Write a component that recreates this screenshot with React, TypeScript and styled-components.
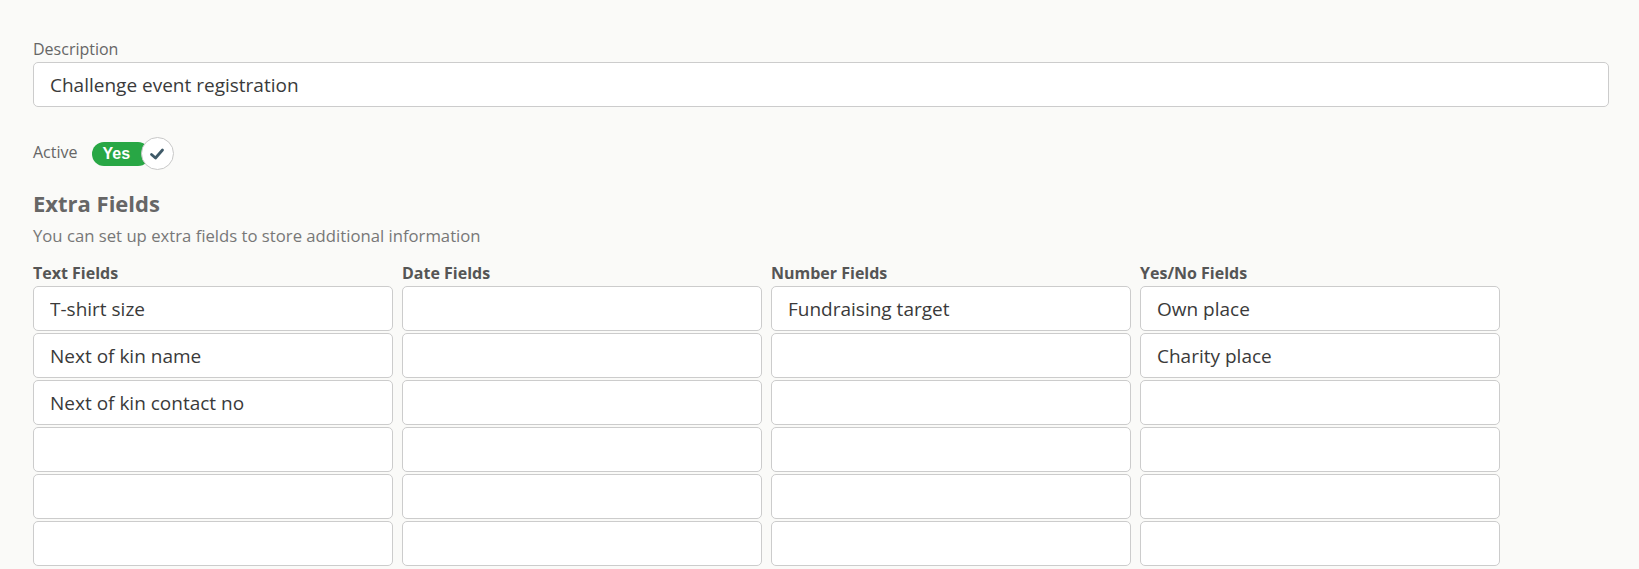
import React from "react";
import styled, { createGlobalStyle } from "styled-components";

const GlobalStyle = createGlobalStyle`
  html, body {
    margin: 0;
    padding: 0;
    background: #fafaf8;
    font-family: "Open Sans", "Liberation Sans", sans-serif;
    color: #333;
  }
  * {
    box-sizing: border-box;
  }
`;

const Page = styled.div`
  padding: 39px 30px 0 33px;
`;

const FieldLabel = styled.label`
  display: block;
  font-size: 16px;
  color: #666;
  line-height: 20px;
  margin-bottom: 3px;
`;

const TextBox = styled.input`
  display: block;
  width: 100%;
  height: 45px;
  padding: 0 16px;
  border: 1px solid #cccccc;
  border-radius: 5px;
  background: #fff;
  font-family: inherit;
  font-size: 19px;
  color: #3a3a3a;
  outline: none;
`;

const ActiveRow = styled.div`
  display: flex;
  align-items: center;
  gap: 14px;
  margin-top: 30px;
`;

const ActiveLabel = styled.span`
  font-size: 16px;
  color: #666;
  line-height: 20px;
  margin-top: -3px;
`;

const Toggle = styled.div`
  position: relative;
  display: flex;
  align-items: center;
  width: 82px;
  height: 33px;
`;

const Track = styled.div`
  display: flex;
  align-items: center;
  width: 58px;
  height: 24px;
  border-radius: 12px;
  background: #28a745;
  padding-left: 11px;
  color: #fff;
  font-family: "Liberation Sans", Arial, sans-serif;
  font-weight: bold;
  font-size: 16px;
`;

const Knob = styled.div`
  position: absolute;
  left: 49px;
  top: 0;
  width: 33px;
  height: 33px;
  border-radius: 50%;
  background: #fff;
  border: 1px solid #c8c8c8;
  display: flex;
  align-items: center;
  justify-content: center;
`;

const Heading = styled.h2`
  margin: 18px 0 0;
  font-size: 22px;
  font-weight: 700;
  color: #666;
  line-height: 30px;
`;

const Subtitle = styled.p`
  margin: 7px 0 0;
  font-size: 16.7px;
  color: #777;
  line-height: 22px;
`;

const Columns = styled.div`
  display: grid;
  grid-template-columns: repeat(4, 360px);
  column-gap: 9px;
  margin-top: 16px;
`;

const Column = styled.div`
  display: flex;
  flex-direction: column;
  gap: 2px;
`;

const ColumnTitle = styled.div`
  font-size: 16px;
  font-weight: 700;
  color: #555;
  line-height: 20px;
  margin-bottom: 1px;
`;

const columns: { title: string; values: string[] }[] = [
  {
    title: "Text Fields",
    values: ["T-shirt size", "Next of kin name", "Next of kin contact no", "", "", ""],
  },
  { title: "Date Fields", values: ["", "", "", "", "", ""] },
  { title: "Number Fields", values: ["Fundraising target", "", "", "", "", ""] },
  { title: "Yes/No Fields", values: ["Own place", "Charity place", "", "", "", ""] },
];

export default function App() {
  return (
    <>
      <GlobalStyle />
      <Page>
        <FieldLabel>Description</FieldLabel>
        <TextBox defaultValue="Challenge event registration" />

        <ActiveRow>
          <ActiveLabel>Active</ActiveLabel>
          <Toggle>
            <Track>Yes</Track>
            <Knob>
              <svg width="16" height="14" viewBox="0 0 16 14">
                <path
                  d="M2.5 7.5 L6.5 11 L13.5 3"
                  fill="none"
                  stroke="#3f5a68"
                  strokeWidth="2.8"
                  strokeLinecap="round"
                  strokeLinejoin="round"
                />
              </svg>
            </Knob>
          </Toggle>
        </ActiveRow>

        <Heading>Extra Fields</Heading>
        <Subtitle>You can set up extra fields to store additional information</Subtitle>

        <Columns>
          {columns.map((col) => (
            <Column key={col.title}>
              <ColumnTitle>{col.title}</ColumnTitle>
              {col.values.map((v, i) => (
                <TextBox key={i} defaultValue={v} />
              ))}
            </Column>
          ))}
        </Columns>
      </Page>
    </>
  );
}
